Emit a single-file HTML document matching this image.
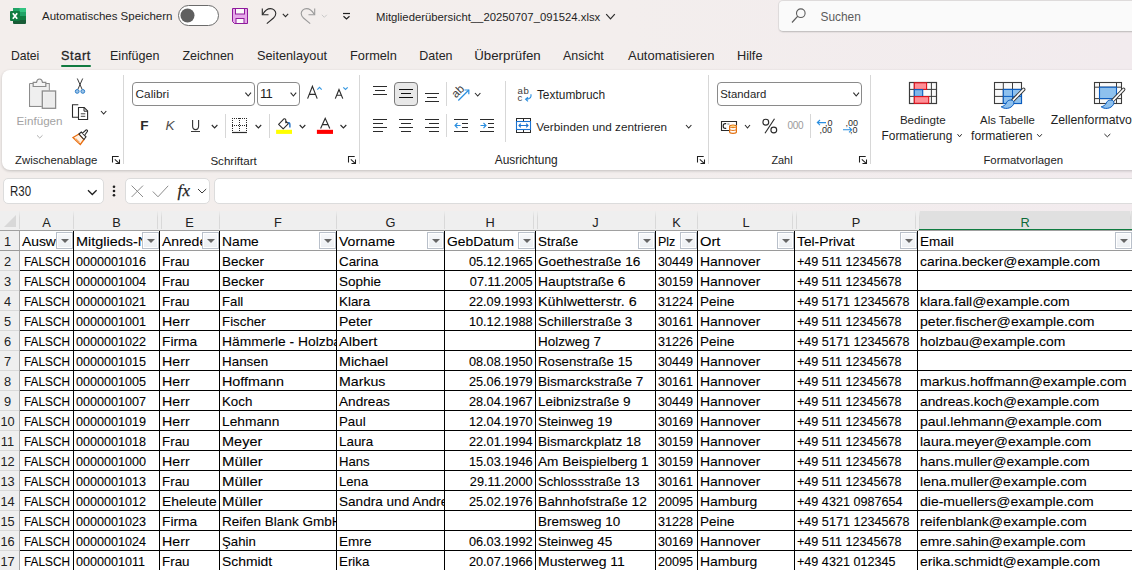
<!DOCTYPE html>
<html><head><meta charset="utf-8">
<style>
*{margin:0;padding:0;box-sizing:border-box}
html,body{width:1132px;height:570px;overflow:hidden}
body{position:relative;background:linear-gradient(90deg,#f3eeec 0%,#f3eeed 55%,#f2ebee 100%);font-family:"Liberation Sans",sans-serif;color:#1f1f1f}
.t{position:absolute;line-height:1;white-space:nowrap}
.a{position:absolute}
svg{position:absolute;overflow:visible}
.ribbon{position:absolute;left:2px;top:69.5px;width:1150px;height:100px;background:#fff;border-radius:8px;box-shadow:0 1px 3px rgba(0,0,0,.2)}
.sep{position:absolute;width:1px;background:#d7d7d7}
.lbl{font-size:11.5px;color:#222}
.tab{font-size:12.7px;color:#242424;top:49.8px}
.combo{position:absolute;background:#fff;border:1px solid #8a8a8a;border-radius:4px}
.hdr{position:absolute;top:211px;height:19px;background:#efefef}
.hl{position:absolute;top:211px;height:18px;width:1px;background:linear-gradient(#eeeeee,#d9d9d9 35%,#d9d9d9)}
.ch{position:absolute;top:212.5px;height:19px;line-height:19px;text-align:center;font-size:12.8px;color:#222}
.rl{position:absolute;left:0;width:19px;height:1px;background:#d9d9d9}
.rn{position:absolute;left:0;width:15px;text-align:center;font-size:12.5px;color:#222;line-height:1}
.vl{position:absolute;top:231px;height:339px;width:1px;background:#000}
.hz{position:absolute;left:20px;width:1112px;height:1px;background:#000}
.c{position:absolute;height:19px;overflow:hidden;white-space:nowrap;font-size:13px;line-height:1;color:#000;-webkit-text-stroke:0.1px #000}
.c span{display:inline-block;transform-origin:0 0}
.c.r span{transform-origin:100% 0}
.fb{position:absolute;width:17px;height:17px;border:1px solid #b9c0ca;background:linear-gradient(#f7f8fa,#eceff3);box-shadow:inset 0 0 0 1px #fff}
.fb:after{content:"";position:absolute;left:3.5px;top:6px;border-left:4px solid transparent;border-right:4px solid transparent;border-top:4.5px solid #666}
</style></head><body>

<!-- ============ TITLE BAR ============ -->
<svg style="left:10px;top:8px" width="16" height="16" viewBox="0 0 16 16">
  <rect x="3" y="0" width="13" height="16" rx="1" fill="#185c37"/>
  <rect x="3" y="0" width="13" height="4" fill="#21a366"/>
  <rect x="9.5" y="0" width="6.5" height="4" fill="#33c481"/>
  <rect x="3" y="4" width="13" height="4" fill="#21a366"/>
  <rect x="3" y="8" width="13" height="4" fill="#107c41"/>
  <rect x="0" y="3" width="10" height="10" rx="1" fill="#107c41"/>
  <path d="M2.8 5.2 L7.2 10.8 M7.2 5.2 L2.8 10.8" stroke="#fff" stroke-width="1.7"/>
</svg>
<div class="t" style="left:42px;top:11px;font-size:11.5px;color:#1f1f1f">Automatisches Speichern</div>
<svg style="left:178px;top:5px" width="41" height="21" viewBox="0 0 41 21">
  <rect x="0.5" y="0.5" width="40" height="20" rx="10" fill="#fff" stroke="#6b6b6b" stroke-width="1"/>
  <circle cx="9.5" cy="10.5" r="7" fill="#5f5f5f"/>
</svg>
<svg style="left:232px;top:8px" width="16" height="16" viewBox="0 0 16 16">
  <path d="M0.5 0.5 H15.5 V15.5 H2.5 L0.5 13.5 Z" fill="#e6a8ea" stroke="#8e1a9c" stroke-width="1"/>
  <rect x="3.5" y="0.5" width="9" height="5.5" fill="#fafafa" stroke="#8e1a9c" stroke-width="1"/>
  <rect x="4" y="10.5" width="8" height="5" fill="#fafafa" stroke="#8e1a9c" stroke-width="1"/>
</svg>
<svg style="left:261px;top:8px" width="16" height="16" viewBox="0 0 16 16">
  <path d="M1.3 0.5 V6.8 H7.5" fill="none" stroke="#2b2b2b" stroke-width="1.1"/>
  <path d="M1.8 6.2 C4 2.5 7 0.6 9.5 0.6 C12.5 0.6 14.8 3 14.8 5.5 C14.8 7.5 13.5 9 12.5 10 L5.8 15.6" fill="none" stroke="#2b2b2b" stroke-width="1.1"/>
</svg>
<svg style="left:282px;top:13px" width="8" height="5" viewBox="0 0 8 5"><path d="M0.8 0.8 L3.5 3.6 L6.2 0.8" fill="none" stroke="#2b2b2b" stroke-width="1.1"/></svg>
<svg style="left:300px;top:8px" width="16" height="16" viewBox="0 0 16 16">
  <path d="M14.7 0.5 V6.8 H8.5" fill="none" stroke="#9a9a9a" stroke-width="1.1"/>
  <path d="M14.2 6.2 C12 2.5 9 0.6 6.5 0.6 C3.5 0.6 1.2 3 1.2 5.5 C1.2 7.5 2.5 9 3.5 10 L10.2 15.6" fill="none" stroke="#9a9a9a" stroke-width="1.1"/>
</svg>
<svg style="left:321px;top:13.5px" width="8" height="5" viewBox="0 0 8 5"><path d="M0.8 0.8 L3.3 3.3 L5.8 0.8" fill="none" stroke="#c9c9c9" stroke-width="1"/></svg>
<svg style="left:342px;top:12px" width="10" height="9" viewBox="0 0 10 9">
  <path d="M1 1.5 H8" stroke="#1f1f1f" stroke-width="1.2"/>
  <path d="M1.5 4.3 L4.5 7 L7.5 4.3" fill="none" stroke="#1f1f1f" stroke-width="1.2"/>
</svg>
<div class="t" style="left:376px;top:12px;font-size:11.3px;color:#1f1f1f">Mitgliederübersicht__20250707_091524.xlsx</div>
<svg style="left:605px;top:13px" width="12" height="8" viewBox="0 0 12 8"><path d="M1.2 1.2 L5.5 5.8 L9.8 1.2" fill="none" stroke="#2b2b2b" stroke-width="1.2"/></svg>

<div class="a" style="left:778px;top:0px;width:400px;height:32px;background:#fafafa;border:1px solid #dedbdb;border-bottom-color:#c6c3c3;border-radius:5px;box-shadow:0 1px 1px rgba(0,0,0,.06)"></div>
<svg style="left:791px;top:8px" width="16" height="16" viewBox="0 0 16 16">
  <circle cx="9.8" cy="5.2" r="4.3" fill="none" stroke="#5c5c5c" stroke-width="1.1"/>
  <path d="M6.8 8.2 L1 14.5" stroke="#5c5c5c" stroke-width="1.2"/>
</svg>
<div class="t" style="left:820.5px;top:12px;font-size:11.9px;color:#5c5c5c">Suchen</div>

<!-- ============ TABS ============ -->
<div class="t" style="left:10.90px;top:50.00px;font-size:12.17px;color:#242424">Datei</div>
<div class="t" style="left:61px;top:50.00px;font-size:12.7px;color:#242424;-webkit-text-stroke:0.3px #242424;letter-spacing:0.65px">Start</div>
<div class="t" style="left:110.00px;top:50.00px;font-size:12.54px;color:#242424">Einfügen</div>
<div class="t" style="left:182.50px;top:50.00px;font-size:12.46px;color:#242424">Zeichnen</div>
<div class="t" style="left:257.00px;top:50.00px;font-size:12.72px;color:#242424">Seitenlayout</div>
<div class="t" style="left:350.00px;top:50.00px;font-size:12.75px;color:#242424">Formeln</div>
<div class="t" style="left:419.25px;top:50.00px;font-size:12.46px;color:#242424">Daten</div>
<div class="t" style="left:474.25px;top:49.00px;font-size:13.29px;color:#242424">Überprüfen</div>
<div class="t" style="left:563.00px;top:50.00px;font-size:12.43px;color:#242424">Ansicht</div>
<div class="t" style="left:628.00px;top:50.00px;font-size:12.97px;color:#242424">Automatisieren</div>
<div class="t" style="left:737.00px;top:50.00px;font-size:12.74px;color:#242424">Hilfe</div>
<div class="a" style="left:61px;top:65px;width:30px;height:2px;background:#117a40;border-radius:1px"></div>

<!-- ============ RIBBON ============ -->
<div class="ribbon"></div>
<svg style="left:28px;top:78px" width="30" height="32" viewBox="28 78 30 32">
 <path d="M29.6 83.5 H33.2 M45.8 83.5 H49.2 V90.5 M41.8 106.3 H29.6 V83.5" fill="#eeeeee" stroke="#8c8c8c" stroke-width="1.2"/>
 <rect x="30.2" y="84.1" width="18.4" height="21.6" fill="#efefef"/>
 <path d="M33.2 82.3 H36.5 C36.8 80 38 79 39.5 79 C41 79 42.2 80 42.5 82.3 H45.8 V86.5 H33.2 Z" fill="#f4f4f4" stroke="#8c8c8c" stroke-width="1.2"/>
 <rect x="42.3" y="91" width="13.3" height="17.3" fill="#f0f0f0" stroke="#8c8c8c" stroke-width="1.3"/>
 <rect x="44.3" y="93" width="9.3" height="13.3" fill="#ececec"/>
</svg>
<div class="t" style="left:16.60px;top:115.00px;font-size:11.65px;color:#a3a3a3">Einfügen</div>
<svg style="left:36px;top:134px" width="9" height="6" viewBox="36 134 9 6"><path d="M37 135.3 L39.75 138 L42.5 135.3" fill="none" stroke="#b0b0b0" stroke-width="1"/></svg>
<svg style="left:73px;top:77px" width="14" height="18" viewBox="73 77 14 18">
 <path d="M77.3 78.5 L82.2 89.5 M82.7 78.5 L77.8 89.5" stroke="#3a3a3a" stroke-width="1" fill="none"/>
 <circle cx="77.2" cy="91.4" r="1.9" fill="#9cc3e8" stroke="#2f7fc9" stroke-width="1"/>
 <circle cx="82.8" cy="91.4" r="1.9" fill="#9cc3e8" stroke="#2f7fc9" stroke-width="1"/>
</svg>
<svg style="left:71px;top:103px" width="19" height="18" viewBox="71 103 19 18">
 <path d="M78.3 104.7 H72.5 V117.3 H78" fill="none" stroke="#2b2b2b" stroke-width="1.1"/>
 <path d="M78.5 107.5 H84.2 L87.6 110.9 V119.5 H78.5 Z" fill="#fff" stroke="#2b2b2b" stroke-width="1.1"/>
 <path d="M84 107.5 V111.2 H87.6" fill="none" stroke="#2b2b2b" stroke-width="1"/>
 <path d="M80.8 113.8 H85.3 M80.8 116.3 H85.3" stroke="#2b2b2b" stroke-width="0.9"/>
</svg>
<svg style="left:100px;top:110px" width="9" height="6" viewBox="100 110 9 6"><path d="M101 111 L103.65 114 L106.3 111" fill="none" stroke="#2b2b2b" stroke-width="1.1"/></svg>
<svg style="left:72px;top:129px" width="17" height="17" viewBox="72 129 17 17">
 <path d="M73 137.5 L79 134 L84 139.5 L80.3 144.5 C78 142.5 75.5 140 73 137.5 Z" fill="#fff3e6" stroke="#e86d0f" stroke-width="1.3"/>
 <path d="M75.5 138.8 L79.3 142.5" stroke="#f5a460" stroke-width="1.6"/>
 <path d="M79 134 L81.3 132 L86 136.8 L84 139.5 Z" fill="#fff" stroke="#2b2b2b" stroke-width="1.1"/>
 <path d="M82.5 133.2 L86 130 C86.8 129.6 87.8 130.4 87.5 131.3 L84.8 135" fill="#fff" stroke="#2b2b2b" stroke-width="1.1"/>
</svg>
<div class="t" style="left:15.00px;top:155.00px;font-size:11.40px;color:#242424">Zwischenablage</div>
<svg style="left:111px;top:155px" width="11" height="11" viewBox="0 0 11 11"><path d="M1.5 7.5 V1.5 H7.7" fill="none" stroke="#1f1f1f" stroke-width="1.05"/><path d="M3.8 4.3 L8.2 8.3 M8.5 4.5 V8.5 H4.5" fill="none" stroke="#1f1f1f" stroke-width="1.05"/></svg>
<div class="sep" style="left:123px;top:75px;height:89px"></div>
<div class="combo" style="left:132.4px;top:82.4px;width:122.5px;height:23.4px"></div>
<div class="t" style="left:135.60px;top:89.00px;font-size:11.82px;color:#1f1f1f">Calibri</div>
<svg style="left:244px;top:91px" width="9" height="7" viewBox="244 91 9 7"><path d="M245.4 92.6 L248.2 96 L251 92.6" fill="none" stroke="#2b2b2b" stroke-width="1.1"/></svg>
<div class="combo" style="left:257px;top:82.4px;width:42.5px;height:23.4px"></div>
<div class="t" style="left:260px;top:87px;font-size:13px;letter-spacing:-0.8px;color:#1f1f1f">11</div>
<svg style="left:289px;top:91px" width="10" height="7" viewBox="289 91 10 7"><path d="M290.6 92.6 L293.4 96 L296.2 92.6" fill="none" stroke="#2b2b2b" stroke-width="1.1"/></svg>
<svg style="left:305px;top:85px" width="46" height="15" viewBox="305 85 46 15">
 <path d="M307.6 98.6 L312.4 86.4 L317.2 98.6 M309.3 94.3 H315.5" fill="none" stroke="#2b2b2b" stroke-width="1.15"/>
 <path d="M317.3 89.6 L319.5 87.4 L321.7 89.6" fill="none" stroke="#3b9ae1" stroke-width="1.2"/>
 <path d="M335.3 98.6 L339 89.6 L342.8 98.6 M336.7 95.2 H341.3" fill="none" stroke="#2b2b2b" stroke-width="1.15"/>
 <path d="M343.3 87.3 L345.5 89.5 L347.7 87.3" fill="none" stroke="#3b9ae1" stroke-width="1.2"/>
</svg>
<div class="t" style="left:140.2px;top:119px;font-size:13.6px;font-weight:bold;color:#2b2b2b">F</div>
<div class="t" style="left:165.4px;top:119px;font-size:13.6px;font-style:italic;color:#505050">K</div>
<svg style="left:190px;top:119px" width="12" height="14" viewBox="190 119 12 14"><path d="M192.6 120 V126 C192.6 128.6 193.8 129.6 195.6 129.6 C197.4 129.6 198.6 128.6 198.6 126 V120" fill="none" stroke="#333" stroke-width="1.1"/></svg>
<div class="a" style="left:191px;top:131px;width:9px;height:1px;background:#3a3a3a"></div>
<svg style="left:210px;top:124px" width="10" height="6" viewBox="210 124 10 6"><path d="M211.8 125 L214.60000000000002 128 L217.4 125" fill="none" stroke="#2b2b2b" stroke-width="1.1"/></svg>
<div class="sep" style="left:225px;top:114px;height:24px"></div>
<svg style="left:231px;top:117px" width="17" height="17" viewBox="231 117 17 17">
 <path d="M232.5 118 V132 M246.5 118 V132 M239.5 118 V132 M232 118.5 H247 M232 125.5 H247" fill="none" stroke="#2b2b2b" stroke-width="1" stroke-dasharray="1 1"/>
 <path d="M232 132.5 H247" stroke="#2b2b2b" stroke-width="1.2"/>
</svg>
<svg style="left:254px;top:124px" width="10" height="6" viewBox="254 124 10 6"><path d="M255.6 125 L258.4 128 L261.2 125" fill="none" stroke="#2b2b2b" stroke-width="1.1"/></svg>
<div class="sep" style="left:269px;top:114px;height:24px"></div>
<svg style="left:275px;top:116px" width="19" height="19" viewBox="275 116 19 19">
 <path d="M285.8 121.2 L288.4 123.6 L283.2 128.8 L278.6 124.3 L283.2 119.6 C283.7 118.4 285.6 118.4 285.8 119.8 V123.2" fill="#fff" stroke="#2b2b2b" stroke-width="1.1" stroke-linejoin="round"/>
 <path d="M288 122.9 C289.3 122.2 289.9 123.4 289.9 124.8 V127.6" fill="none" stroke="#1f6fc4" stroke-width="1.4"/>
 <rect x="276.1" y="129.8" width="15.9" height="4.1" fill="#ffff00"/>
</svg>
<svg style="left:298px;top:124px" width="10" height="6" viewBox="298 124 10 6"><path d="M299.7 125 L302.5 128 L305.3 125" fill="none" stroke="#2b2b2b" stroke-width="1.1"/></svg>
<svg style="left:316px;top:117px" width="18" height="18" viewBox="316 117 18 18">
 <path d="M320.6 128.5 L325.2 118.3 L329.8 128.5 M322.4 124.6 H328" fill="none" stroke="#2b2b2b" stroke-width="1.15"/>
 <rect x="316.9" y="129.8" width="16.1" height="4.1" fill="#ff0000"/>
</svg>
<svg style="left:339px;top:124px" width="10" height="6" viewBox="339 124 10 6"><path d="M340.5 125 L343.4 128 L346.3 125" fill="none" stroke="#2b2b2b" stroke-width="1.1"/></svg>
<div class="t" style="left:210.40px;top:155.00px;font-size:11.60px;color:#242424">Schriftart</div>
<svg style="left:347px;top:155px" width="11" height="11" viewBox="0 0 11 11"><path d="M1.5 7.5 V1.5 H7.7" fill="none" stroke="#1f1f1f" stroke-width="1.05"/><path d="M3.8 4.3 L8.2 8.3 M8.5 4.5 V8.5 H4.5" fill="none" stroke="#1f1f1f" stroke-width="1.05"/></svg>
<div class="sep" style="left:359px;top:75px;height:89px"></div>
<div class="a" style="left:394px;top:82px;width:24px;height:23.5px;background:#e8e8e8;border:1px solid #7a7a7a;border-radius:4px"></div>
<svg style="left:370px;top:80px" width="130" height="60" viewBox="370 80 130 60">
 <path d="M373 86.5 H387 M375 90.5 H385 M373 94.5 H387 " stroke="#2b2b2b" stroke-width="1"/>
 <path d="M399 89.5 H413 M401 93.5 H411 M399 97.5 H413 " stroke="#111" stroke-width="1.1"/>
 <path d="M425 93.5 H439 M427 97.5 H437 M425 101.5 H439 " stroke="#2b2b2b" stroke-width="1"/>
 <path d="M373 119.5 H387 M373 123.5 H383 M373 127.5 H387 M373 131.5 H383 " stroke="#2b2b2b" stroke-width="1"/>
 <path d="M399 119.5 H413 M401 123.5 H411 M399 127.5 H413 M401 131.5 H411 " stroke="#2b2b2b" stroke-width="1"/>
 <path d="M425 119.5 H439 M429 123.5 H439 M425 127.5 H439 M429 131.5 H439 " stroke="#2b2b2b" stroke-width="1"/>
 <path d="M454 119.5 H468 M462 123.5 H468 M462 127.5 H468 M454 131.5 H468" stroke="#2b2b2b" stroke-width="1"/>
 <path d="M460.5 125.5 H455 M457.5 123 L455 125.5 L457.5 128" fill="none" stroke="#2b8fe0" stroke-width="1.1"/>
 <path d="M480 119.5 H494 M488 123.5 H494 M488 127.5 H494 M480 131.5 H494" stroke="#2b2b2b" stroke-width="1"/>
 <path d="M480.5 125.5 H486 M483.5 123 L486 125.5 L483.5 128" fill="none" stroke="#2b8fe0" stroke-width="1.1"/>
</svg>
<div class="sep" style="left:446px;top:82px;height:24px"></div>
<div class="sep" style="left:446px;top:114px;height:23px"></div>
<svg style="left:451px;top:84px" width="20" height="18" viewBox="451 84 20 18">
 <text x="0" y="0" transform="translate(456 98.5) rotate(-45)" font-family="Liberation Sans" font-size="11.5" fill="#3a3a3a">ab</text>
 <path d="M458.3 100.5 L468.8 90" stroke="#2b8fe0" stroke-width="1.2"/>
 <path d="M464.5 90 H468.8 V94.3" fill="none" stroke="#2b8fe0" stroke-width="1.2"/>
</svg>
<svg style="left:474px;top:92px" width="9" height="6" viewBox="474 92 9 6"><path d="M475 93 L477.7 96 L480.4 93" fill="none" stroke="#2b2b2b" stroke-width="1.1"/></svg>
<div class="sep" style="left:505px;top:81px;height:61px"></div>
<svg style="left:516px;top:85px" width="19" height="19" viewBox="516 85 19 19">
 <text x="517.6" y="94.2" font-family="Liberation Sans" font-size="9.6" fill="#3a3a3a" letter-spacing="0.6">ab</text>
 <text x="517.6" y="101.2" font-family="Liberation Sans" font-size="9.6" fill="#3a3a3a">c</text>
 <path d="M530.8 94.2 C531.8 96.8 530.3 99.3 526.2 99.3 M528 97.2 L525.6 99.3 L528 101.4" fill="none" stroke="#2b8fe0" stroke-width="1.15"/>
</svg>
<div class="t" style="left:536.90px;top:90.00px;font-size:11.93px;color:#1f1f1f">Textumbruch</div>
<svg style="left:515px;top:117px" width="17" height="17" viewBox="515 117 17 17">
 <rect x="516.5" y="118.5" width="14" height="14" fill="#fff" stroke="#2b2b2b" stroke-width="1"/>
 <path d="M523.5 118.5 V121.5 M523.5 129.5 V132.5" stroke="#2b2b2b" stroke-width="1"/>
 <rect x="516.5" y="121.5" width="14" height="8" fill="#fff" stroke="#1a73d1" stroke-width="1.1"/>
 <path d="M519 125.5 H528 M520.8 123.7 L519 125.5 L520.8 127.3 M526.2 123.7 L528 125.5 L526.2 127.3" fill="none" stroke="#1a73d1" stroke-width="1.1"/>
</svg>
<div class="t" style="left:536.20px;top:121.00px;font-size:11.73px;color:#1f1f1f">Verbinden und zentrieren</div>
<svg style="left:685px;top:124px" width="9" height="6" viewBox="685 124 9 6"><path d="M686 125 L688.7 128 L691.4 125" fill="none" stroke="#2b2b2b" stroke-width="1.1"/></svg>
<div class="t" style="left:494.70px;top:155.00px;font-size:11.93px;color:#242424">Ausrichtung</div>
<svg style="left:696px;top:155px" width="11" height="11" viewBox="0 0 11 11"><path d="M1.5 7.5 V1.5 H7.7" fill="none" stroke="#1f1f1f" stroke-width="1.05"/><path d="M3.8 4.3 L8.2 8.3 M8.5 4.5 V8.5 H4.5" fill="none" stroke="#1f1f1f" stroke-width="1.05"/></svg>
<div class="sep" style="left:708px;top:75px;height:89px"></div>
<div class="combo" style="left:717.3px;top:82.1px;width:145px;height:23.5px"></div>
<div class="t" style="left:720.30px;top:89.00px;font-size:11.33px;color:#1f1f1f">Standard</div>
<svg style="left:852px;top:91px" width="9" height="7" viewBox="852 91 9 7"><path d="M853.4 92.6 L856.2 96 L859 92.6" fill="none" stroke="#2b2b2b" stroke-width="1.1"/></svg>
<svg style="left:720px;top:120px" width="19" height="15" viewBox="720 120 19 15">
 <path d="M729 130.5 H721.5 V121.5 H736.5 V125.5" fill="none" stroke="#2b2b2b" stroke-width="1.1"/>
 <path d="M726.2 123.6 C723.6 123.3 723.2 124.7 723.2 126 C723.2 127.4 723.6 128.7 726.2 128.4" fill="none" stroke="#1f1f1f" stroke-width="1.2"/>
 <path d="M727.3 124 H729.5" stroke="#555" stroke-width="0.8"/>
 <path d="M729.6 126.3 C729.6 124.6 736.4 124.6 736.4 126.3 V132 C736.4 133.8 729.6 133.8 729.6 132 Z" fill="#fff" stroke="#e2700f" stroke-width="1.2"/>
 <path d="M729.6 126.5 C729.6 128 736.4 128 736.4 126.5 M729.6 129.3 C729.6 130.8 736.4 130.8 736.4 129.3" fill="none" stroke="#e2700f" stroke-width="1"/>
 <ellipse cx="733" cy="126.2" rx="2.2" ry="0.7" fill="#fbd36b"/>
</svg>
<svg style="left:744px;top:124px" width="8" height="6" viewBox="744 124 8 6"><path d="M745 125 L747.5 128 L750 125" fill="none" stroke="#2b2b2b" stroke-width="1.1"/></svg>
<svg style="left:760px;top:117px" width="20" height="18" viewBox="760 117 20 18"><circle cx="765.8" cy="122.2" r="2.9" fill="none" stroke="#2b2b2b" stroke-width="1.15"/><circle cx="773.8" cy="130" r="2.9" fill="none" stroke="#2b2b2b" stroke-width="1.15"/><path d="M774.5 118.8 L765 133.3" stroke="#2b2b2b" stroke-width="1.15"/></svg>
<div class="t" style="left:787.5px;top:121px;font-size:10px;color:#9a9a9a;letter-spacing:-0.3px">000</div>
<div class="sep" style="left:810px;top:114px;height:24px"></div>
<svg style="left:815px;top:117px" width="46" height="18" viewBox="815 117 46 18">
 <text x="825" y="126.2" font-family="Liberation Sans" font-size="9" fill="#2b2b2b">,0</text>
 <text x="819.5" y="132.8" font-family="Liberation Sans" font-size="9" fill="#2b2b2b">,00</text>
 <path d="M826 122.6 H817.5 M820 120 L817.3 122.6 L820 125.2" fill="none" stroke="#2b8fe0" stroke-width="1.1"/>
 <text x="845.5" y="126" font-family="Liberation Sans" font-size="9" fill="#2b2b2b">,00</text>
 <text x="850" y="132.8" font-family="Liberation Sans" font-size="9" fill="#2b2b2b">,0</text>
 <path d="M843 129.8 H851.5 M849 127.2 L851.7 129.8 L849 132.4" fill="none" stroke="#2b8fe0" stroke-width="1.1"/>
</svg>
<div class="t" style="left:771.40px;top:155.00px;font-size:10.90px;color:#242424">Zahl</div>
<svg style="left:858px;top:155px" width="11" height="11" viewBox="0 0 11 11"><path d="M1.5 7.5 V1.5 H7.7" fill="none" stroke="#1f1f1f" stroke-width="1.05"/><path d="M3.8 4.3 L8.2 8.3 M8.5 4.5 V8.5 H4.5" fill="none" stroke="#1f1f1f" stroke-width="1.05"/></svg>
<div class="sep" style="left:870px;top:75px;height:89px"></div>
<svg style="left:908px;top:81px" width="30" height="24" viewBox="908 81 30 24">
 <rect x="909.5" y="82.5" width="27" height="21" fill="#fafafa" stroke="#3c3c3c" stroke-width="1.2"/>
 <path d="M914.3 82.5 V103.5 M931.4 82.5 V103.5 M909.5 89.4 H936.5 M909.5 96.4 H936.5" stroke="#3c3c3c" stroke-width="1"/>
 <rect x="914.3" y="82.8" width="12.3" height="6.6" fill="#ff8f96" stroke="#e0101a" stroke-width="1.1"/>
 <rect x="914.3" y="89.6" width="8.4" height="6.8" fill="#7fb6ea" stroke="#0a5cc0" stroke-width="1.1"/>
 <rect x="914.3" y="96.6" width="14.4" height="6.7" fill="#ff8f96" stroke="#e0101a" stroke-width="1.1"/>
</svg>
<div class="t" style="left:899.90px;top:114.00px;font-size:11.60px;color:#1f1f1f">Bedingte</div>
<div class="t" style="left:881.50px;top:131.00px;font-size:11.91px;color:#1f1f1f">Formatierung</div>
<svg style="left:956px;top:133px" width="8" height="6" viewBox="956 133 8 6"><path d="M957.5 134.2 L959.6 136.8 L961.7 134.2" fill="none" stroke="#2b2b2b" stroke-width="1"/></svg>
<svg style="left:992px;top:81px" width="34" height="30" viewBox="992 81 34 30">
 <rect x="994.5" y="82.5" width="27" height="21" fill="#fafafa" stroke="#3c3c3c" stroke-width="1.1"/>
 <path d="M1003.3 82.5 V103.5 M1012.5 82.5 V103.5 M994.5 89.4 H1021.5 M994.5 96.4 H1021.5" stroke="#3c3c3c" stroke-width="1"/>
 <rect x="1003.3" y="89.4" width="18.2" height="14.1" fill="#8ec1ee" stroke="#0a5cc0" stroke-width="1.1"/>
 <path d="M1012.5 89.4 V103.5 M1003.3 96.4 H1021.5" stroke="#0a5cc0" stroke-width="1"/>
 <path d="M1023.6 89.4 L1011.8 101.6" stroke="#3a3a3a" stroke-width="3.6" stroke-linecap="round"/>
 <path d="M1023.6 89.4 L1011.8 101.6" stroke="#fff" stroke-width="1.6" stroke-linecap="round"/>
 <path d="M1012.8 100.6 C1010 99.3 1007.2 100.5 1006.3 103 C1005.5 105 1003.5 106.3 1001.2 106.8 C1004 109.2 1011 109.3 1013.6 104.2 C1014.2 103 1013.8 101.5 1012.8 100.6 Z" fill="#8ec1ee" stroke="#0a5cc0" stroke-width="1"/>
</svg>
<div class="t" style="left:980.10px;top:115.00px;font-size:11.35px;color:#1f1f1f">Als Tabelle</div>
<div class="t" style="left:971.10px;top:130.00px;font-size:12.14px;color:#1f1f1f">formatieren</div>
<svg style="left:1036px;top:133px" width="8" height="6" viewBox="1036 133 8 6"><path d="M1037.2 134.2 L1039.5500000000002 136.8 L1041.9 134.2" fill="none" stroke="#2b2b2b" stroke-width="1"/></svg>
<svg style="left:1092px;top:81px" width="34" height="30" viewBox="1092 81 34 30">
 <rect x="1094.5" y="82.5" width="27" height="21" fill="#fafafa" stroke="#3c3c3c" stroke-width="1.1"/>
 <path d="M1099.5 82.5 V103.5 M1116.5 82.5 V103.5 M1094.5 87.2 H1121.5 M1094.5 98.6 H1121.5" stroke="#3c3c3c" stroke-width="1"/>
 <rect x="1099.5" y="87.2" width="17" height="11.4" fill="#8ec1ee" stroke="#0a5cc0" stroke-width="1.1"/>
 <path d="M1123.6 89.4 L1111.8 101.6" stroke="#3a3a3a" stroke-width="3.6" stroke-linecap="round"/>
 <path d="M1123.6 89.4 L1111.8 101.6" stroke="#fff" stroke-width="1.6" stroke-linecap="round"/>
 <path d="M1112.8 100.6 C1110 99.3 1107.2 100.5 1106.3 103 C1105.5 105 1103.5 106.3 1101.2 106.8 C1104 109.2 1111 109.3 1113.6 104.2 C1114.2 103 1113.8 101.5 1112.8 100.6 Z" fill="#8ec1ee" stroke="#0a5cc0" stroke-width="1"/>
</svg>
<div class="t" style="left:1050.80px;top:114.00px;font-size:12.25px;color:#1f1f1f">Zellenformatvorlagen</div>
<svg style="left:1103px;top:133px" width="10" height="6" viewBox="1103 133 10 6"><path d="M1104.4 134 L1107.35 136.8 L1110.3 134" fill="none" stroke="#2b2b2b" stroke-width="1"/></svg>
<div class="t" style="left:983.40px;top:155.00px;font-size:11.38px;color:#242424">Formatvorlagen</div>

<!-- ============ FORMULA BAR ============ -->
<div class="a" style="left:2.5px;top:178px;width:101px;height:25.5px;background:#fff;border:1px solid #dcdcdc;border-radius:5px"></div>
<div class="t" style="left:9.5px;top:183.8px;font-size:14px;color:#1f1f1f;transform:scaleX(0.82);transform-origin:0 0">R30</div>
<svg style="left:87px;top:189px" width="12" height="8" viewBox="0 0 12 8"><path d="M1 1.2 L5.3 5.5 L9.6 1.2" fill="none" stroke="#1f1f1f" stroke-width="1.3"/></svg>
<svg style="left:112px;top:185px" width="4" height="12" viewBox="0 0 4 12"><circle cx="2" cy="1.8" r="1.3" fill="#1f1f1f"/><circle cx="2" cy="6" r="1.3" fill="#1f1f1f"/><circle cx="2" cy="10.2" r="1.3" fill="#1f1f1f"/></svg>
<div class="a" style="left:124.5px;top:178px;width:85px;height:25.5px;background:#fff;border:1px solid #dcdcdc;border-radius:5px"></div>
<svg style="left:131px;top:185px" width="13" height="13" viewBox="0 0 13 13"><path d="M0.6 0.6 L12 12 M12 0.6 L0.6 12" stroke="#8c8c8c" stroke-width="1"/></svg>
<svg style="left:152px;top:185px" width="17" height="13" viewBox="0 0 17 13"><path d="M0.8 6.5 L6 11.8 L16.2 0.8" fill="none" stroke="#8c8c8c" stroke-width="1"/></svg>
<div class="t" style="left:177.5px;top:181.5px;font-family:'Liberation Serif',serif;font-style:italic;font-size:17px;color:#1f1f1f;-webkit-text-stroke:0.25px #1f1f1f;letter-spacing:0.2px">fx</div>
<svg style="left:197px;top:188px" width="11" height="7" viewBox="0 0 11 7"><path d="M1 1 L5 5 L9.2 1" fill="none" stroke="#3a3a3a" stroke-width="1"/></svg>
<div class="a" style="left:214px;top:178px;width:950px;height:25.5px;background:#fff;border:1px solid #dcdcdc;border-radius:5px"></div>

<!-- ============ GRID ============ -->
<div class="hdr" style="left:0;width:919px"></div>
<div class="hdr" style="left:919px;width:213px;background:#e0e0e0"></div>
<div class="a" style="left:919px;top:229px;width:213px;height:2px;background:#107c41"></div>
<svg style="left:4px;top:215px" width="12" height="12" viewBox="0 0 12 12"><path d="M12 0 V12 H0 Z" fill="#d8d8d8"/></svg>
<div class="hl" style="left:19px"></div>
<div class="hl" style="left:73px"></div>
<div class="hl" style="left:157px"></div>
<div class="hl" style="left:161px"></div>
<div class="hl" style="left:219px"></div>
<div class="hl" style="left:336px"></div>
<div class="hl" style="left:444px"></div>
<div class="hl" style="left:533px"></div>
<div class="hl" style="left:537px"></div>
<div class="hl" style="left:655px"></div>
<div class="hl" style="left:697px"></div>
<div class="hl" style="left:792px"></div>
<div class="hl" style="left:796px"></div>
<div class="hl" style="left:915px"></div>
<div class="hl" style="left:919px"></div>
<div class="hl" style="left:1130px"></div>
<div class="a" style="left:0;top:230px;width:1132px;height:1px;background:#a0a0a0"></div>
<div class="ch" style="left:20px;width:53px;color:#222">A</div>
<div class="ch" style="left:74px;width:85px;color:#222">B</div>
<div class="ch" style="left:160px;width:59px;color:#222">E</div>
<div class="ch" style="left:220px;width:116px;color:#222">F</div>
<div class="ch" style="left:337px;width:107px;color:#222">G</div>
<div class="ch" style="left:445px;width:90px;color:#222">H</div>
<div class="ch" style="left:536px;width:119px;color:#222">J</div>
<div class="ch" style="left:656px;width:41px;color:#222">K</div>
<div class="ch" style="left:698px;width:96px;color:#222">L</div>
<div class="ch" style="left:795px;width:122px;color:#222">P</div>
<div class="ch" style="left:918px;width:214px;color:#0e6b38">R</div>
<div class="a" style="left:0;top:231px;width:19px;height:339px;background:#efefef"></div>
<div class="a" style="left:19px;top:231px;width:1px;height:339px;background:#a6a6a6"></div>
<div class="a" style="left:20px;top:231px;width:1112px;height:339px;background:#fff"></div>
<div class="rn" style="top:235.66px;font-size:12.8px">1</div>
<div class="rl" style="top:270px"></div>
<div class="rn" style="top:255.66px;font-size:12.8px">2</div>
<div class="rl" style="top:290px"></div>
<div class="rn" style="top:275.66px;font-size:12.8px">3</div>
<div class="rl" style="top:310px"></div>
<div class="rn" style="top:295.66px;font-size:12.8px">4</div>
<div class="rl" style="top:330px"></div>
<div class="rn" style="top:315.66px;font-size:12.8px">5</div>
<div class="rl" style="top:350px"></div>
<div class="rn" style="top:335.66px;font-size:12.8px">6</div>
<div class="rl" style="top:370px"></div>
<div class="rn" style="top:355.66px;font-size:12.8px">7</div>
<div class="rl" style="top:390px"></div>
<div class="rn" style="top:375.66px;font-size:12.8px">8</div>
<div class="rl" style="top:410px"></div>
<div class="rn" style="top:395.66px;font-size:12.8px">9</div>
<div class="rl" style="top:430px"></div>
<div class="rn" style="top:415.66px;font-size:12.8px">10</div>
<div class="rl" style="top:450px"></div>
<div class="rn" style="top:435.66px;font-size:12.8px">11</div>
<div class="rl" style="top:470px"></div>
<div class="rn" style="top:455.66px;font-size:12.8px">12</div>
<div class="rl" style="top:490px"></div>
<div class="rn" style="top:475.66px;font-size:12.8px">13</div>
<div class="rl" style="top:510px"></div>
<div class="rn" style="top:495.66px;font-size:12.8px">14</div>
<div class="rl" style="top:530px"></div>
<div class="rn" style="top:515.66px;font-size:12.8px">15</div>
<div class="rl" style="top:550px"></div>
<div class="rn" style="top:535.66px;font-size:12.8px">16</div>
<div class="rl" style="top:570px"></div>
<div class="rn" style="top:555.66px;font-size:12.8px">17</div>
<div class="hz" style="top:270px"></div>
<div class="hz" style="top:290px"></div>
<div class="hz" style="top:310px"></div>
<div class="hz" style="top:330px"></div>
<div class="hz" style="top:350px"></div>
<div class="hz" style="top:370px"></div>
<div class="hz" style="top:390px"></div>
<div class="hz" style="top:410px"></div>
<div class="hz" style="top:430px"></div>
<div class="hz" style="top:450px"></div>
<div class="hz" style="top:470px"></div>
<div class="hz" style="top:490px"></div>
<div class="hz" style="top:510px"></div>
<div class="hz" style="top:530px"></div>
<div class="hz" style="top:550px"></div>
<div class="hz" style="top:570px"></div>
<div class="a" style="left:0;top:250px;width:1132px;height:1px;background:#9a9a9a"></div>
<div class="vl" style="left:73px"></div>
<div class="vl" style="left:159px"></div>
<div class="vl" style="left:219px"></div>
<div class="vl" style="left:336px"></div>
<div class="vl" style="left:444px"></div>
<div class="vl" style="left:535px"></div>
<div class="vl" style="left:655px"></div>
<div class="vl" style="left:697px"></div>
<div class="vl" style="left:794px"></div>
<div class="vl" style="left:917px"></div>
<div class="c" style="left:20px;width:36px;top:234.57px;font-size:13.5px"><span style="margin-left:1.5px;transform:scaleX(1.0259)">Auswahl</span></div>
<div class="fb" style="left:56px;top:232px"></div>
<div class="c" style="left:74px;width:68px;top:234.57px;font-size:13.5px"><span style="margin-left:1.5px;transform:scaleX(1.0688)">Mitglieds-Nr</span></div>
<div class="fb" style="left:142px;top:232px"></div>
<div class="c" style="left:160px;width:42px;top:234.57px;font-size:13.5px"><span style="margin-left:1.5px;transform:scaleX(1.0381)">Anrede</span></div>
<div class="fb" style="left:202px;top:232px"></div>
<div class="c" style="left:220px;width:99px;top:234.57px;font-size:13.5px"><span style="margin-left:1.5px;transform:scaleX(1.0218)">Name</span></div>
<div class="fb" style="left:319px;top:232px"></div>
<div class="c" style="left:337px;width:90px;top:234.57px;font-size:13.5px"><span style="margin-left:1.5px;transform:scaleX(1.0389)">Vorname</span></div>
<div class="fb" style="left:427px;top:232px"></div>
<div class="c" style="left:445px;width:73px;top:234.57px;font-size:13.5px"><span style="margin-left:1.5px;transform:scaleX(1.0262)">GebDatum</span></div>
<div class="fb" style="left:518px;top:232px"></div>
<div class="c" style="left:536px;width:102px;top:234.57px;font-size:13.5px"><span style="margin-left:1.5px;transform:scaleX(0.9931)">Straße</span></div>
<div class="fb" style="left:638px;top:232px"></div>
<div class="c" style="left:656px;width:24px;top:234.57px;font-size:13.5px"><span style="margin-left:1.5px;transform:scaleX(0.9249)">Plz</span></div>
<div class="fb" style="left:680px;top:232px"></div>
<div class="c" style="left:698px;width:79px;top:234.57px;font-size:13.5px"><span style="margin-left:1.5px;transform:scaleX(1.0911)">Ort</span></div>
<div class="fb" style="left:777px;top:232px"></div>
<div class="c" style="left:795px;width:105px;top:234.57px;font-size:13.5px"><span style="margin-left:1.5px;transform:scaleX(1.0213)">Tel-Privat</span></div>
<div class="fb" style="left:900px;top:232px"></div>
<div class="c" style="left:918px;width:197px;top:234.57px;font-size:13.5px"><span style="margin-left:1.5px;transform:scaleX(1.0019)">Email</span></div>
<div class="fb" style="left:1115px;top:232px"></div>
<div class="c" style="left:23.94px;width:56.73px;top:254.57px;font-size:13.5px"><span style="transform:scaleX(0.8773)">FALSCH</span></div>
<div class="c" style="left:74px;width:85px;top:254.57px;font-size:13.5px"><span style="margin-left:1.5px;transform:scaleX(0.9323)">0000001016</span></div>
<div class="c" style="left:160px;width:59px;top:254.57px;font-size:13.5px"><span style="margin-left:1.5px;transform:scaleX(0.9925)">Frau</span></div>
<div class="c" style="left:220px;width:116px;top:254.57px;font-size:13.5px"><span style="margin-left:1.5px;transform:scaleX(1.0003)">Becker</span></div>
<div class="c" style="left:337px;width:107px;top:254.57px;font-size:13.5px"><span style="margin-left:1.5px;transform:scaleX(0.9917)">Carina</span></div>
<div class="c r" style="left:445px;width:90px;top:254.57px;font-size:13.5px;text-align:right"><span style="margin-right:2px;transform:scaleX(0.9424)">05.12.1965</span></div>
<div class="c" style="left:536px;width:119px;top:254.57px;font-size:13.5px"><span style="margin-left:1.5px;transform:scaleX(1.0112)">Goethestraße 16</span></div>
<div class="c" style="left:656px;width:41px;top:254.57px;font-size:13.5px"><span style="margin-left:1.5px;transform:scaleX(0.9323)">30449</span></div>
<div class="c" style="left:698px;width:96px;top:254.57px;font-size:13.5px"><span style="margin-left:1.5px;transform:scaleX(1.0330)">Hannover</span></div>
<div class="c" style="left:795px;width:122px;top:254.57px;font-size:13.5px"><span style="margin-left:1.5px;transform:scaleX(0.9332)">+49 511 12345678</span></div>
<div class="c" style="left:918px;width:214px;top:254.57px;font-size:13.5px"><span style="margin-left:1.5px;transform:scaleX(1.0282)">carina.becker@example.com</span></div>
<div class="c" style="left:23.94px;width:56.73px;top:274.57px;font-size:13.5px"><span style="transform:scaleX(0.8773)">FALSCH</span></div>
<div class="c" style="left:74px;width:85px;top:274.57px;font-size:13.5px"><span style="margin-left:1.5px;transform:scaleX(0.9323)">0000001004</span></div>
<div class="c" style="left:160px;width:59px;top:274.57px;font-size:13.5px"><span style="margin-left:1.5px;transform:scaleX(0.9925)">Frau</span></div>
<div class="c" style="left:220px;width:116px;top:274.57px;font-size:13.5px"><span style="margin-left:1.5px;transform:scaleX(1.0003)">Becker</span></div>
<div class="c" style="left:337px;width:107px;top:274.57px;font-size:13.5px"><span style="margin-left:1.5px;transform:scaleX(0.9997)">Sophie</span></div>
<div class="c r" style="left:445px;width:90px;top:274.57px;font-size:13.5px;text-align:right"><span style="margin-right:2px;transform:scaleX(0.9424)">07.11.2005</span></div>
<div class="c" style="left:536px;width:119px;top:274.57px;font-size:13.5px"><span style="margin-left:1.5px;transform:scaleX(1.0223)">Hauptstraße 6</span></div>
<div class="c" style="left:656px;width:41px;top:274.57px;font-size:13.5px"><span style="margin-left:1.5px;transform:scaleX(0.9323)">30159</span></div>
<div class="c" style="left:698px;width:96px;top:274.57px;font-size:13.5px"><span style="margin-left:1.5px;transform:scaleX(1.0330)">Hannover</span></div>
<div class="c" style="left:795px;width:122px;top:274.57px;font-size:13.5px"><span style="margin-left:1.5px;transform:scaleX(0.9332)">+49 511 12345678</span></div>
<div class="c" style="left:23.94px;width:56.73px;top:294.57px;font-size:13.5px"><span style="transform:scaleX(0.8773)">FALSCH</span></div>
<div class="c" style="left:74px;width:85px;top:294.57px;font-size:13.5px"><span style="margin-left:1.5px;transform:scaleX(0.9323)">0000001021</span></div>
<div class="c" style="left:160px;width:59px;top:294.57px;font-size:13.5px"><span style="margin-left:1.5px;transform:scaleX(0.9925)">Frau</span></div>
<div class="c" style="left:220px;width:116px;top:294.57px;font-size:13.5px"><span style="margin-left:1.5px;transform:scaleX(0.9765)">Fall</span></div>
<div class="c" style="left:337px;width:107px;top:294.57px;font-size:13.5px"><span style="margin-left:1.5px;transform:scaleX(0.9915)">Klara</span></div>
<div class="c r" style="left:445px;width:90px;top:294.57px;font-size:13.5px;text-align:right"><span style="margin-right:2px;transform:scaleX(0.9424)">22.09.1993</span></div>
<div class="c" style="left:536px;width:119px;top:294.57px;font-size:13.5px"><span style="margin-left:1.5px;transform:scaleX(1.0603)">Kühlwetterstr. 6</span></div>
<div class="c" style="left:656px;width:41px;top:294.57px;font-size:13.5px"><span style="margin-left:1.5px;transform:scaleX(0.9323)">31224</span></div>
<div class="c" style="left:698px;width:96px;top:294.57px;font-size:13.5px"><span style="margin-left:1.5px;transform:scaleX(0.9978)">Peine</span></div>
<div class="c" style="left:795px;width:122px;top:294.57px;font-size:13.5px"><span style="margin-left:1.5px;transform:scaleX(0.9332)">+49 5171 12345678</span></div>
<div class="c" style="left:918px;width:214px;top:294.57px;font-size:13.5px"><span style="margin-left:1.5px;transform:scaleX(1.0371)">klara.fall@example.com</span></div>
<div class="c" style="left:23.94px;width:56.73px;top:314.57px;font-size:13.5px"><span style="transform:scaleX(0.8773)">FALSCH</span></div>
<div class="c" style="left:74px;width:85px;top:314.57px;font-size:13.5px"><span style="margin-left:1.5px;transform:scaleX(0.9323)">0000001001</span></div>
<div class="c" style="left:160px;width:59px;top:314.57px;font-size:13.5px"><span style="margin-left:1.5px;transform:scaleX(1.0527)">Herr</span></div>
<div class="c" style="left:220px;width:116px;top:314.57px;font-size:13.5px"><span style="margin-left:1.5px;transform:scaleX(0.9872)">Fischer</span></div>
<div class="c" style="left:337px;width:107px;top:314.57px;font-size:13.5px"><span style="margin-left:1.5px;transform:scaleX(1.0341)">Peter</span></div>
<div class="c r" style="left:445px;width:90px;top:314.57px;font-size:13.5px;text-align:right"><span style="margin-right:2px;transform:scaleX(0.9424)">10.12.1988</span></div>
<div class="c" style="left:536px;width:119px;top:314.57px;font-size:13.5px"><span style="margin-left:1.5px;transform:scaleX(1.0061)">Schillerstraße 3</span></div>
<div class="c" style="left:656px;width:41px;top:314.57px;font-size:13.5px"><span style="margin-left:1.5px;transform:scaleX(0.9323)">30161</span></div>
<div class="c" style="left:698px;width:96px;top:314.57px;font-size:13.5px"><span style="margin-left:1.5px;transform:scaleX(1.0330)">Hannover</span></div>
<div class="c" style="left:795px;width:122px;top:314.57px;font-size:13.5px"><span style="margin-left:1.5px;transform:scaleX(0.9332)">+49 511 12345678</span></div>
<div class="c" style="left:918px;width:214px;top:314.57px;font-size:13.5px"><span style="margin-left:1.5px;transform:scaleX(1.0418)">peter.fischer@example.com</span></div>
<div class="c" style="left:23.94px;width:56.73px;top:334.57px;font-size:13.5px"><span style="transform:scaleX(0.8773)">FALSCH</span></div>
<div class="c" style="left:74px;width:85px;top:334.57px;font-size:13.5px"><span style="margin-left:1.5px;transform:scaleX(0.9323)">0000001022</span></div>
<div class="c" style="left:160px;width:59px;top:334.57px;font-size:13.5px"><span style="margin-left:1.5px;transform:scaleX(1.0203)">Firma</span></div>
<div class="c" style="left:220px;width:116px;top:334.57px;font-size:13.5px"><span style="margin-left:1.5px;transform:scaleX(1.0236)">Hämmerle - Holzbau</span></div>
<div class="c" style="left:337px;width:107px;top:334.57px;font-size:13.5px"><span style="margin-left:1.5px;transform:scaleX(1.0838)">Albert</span></div>
<div class="c" style="left:536px;width:119px;top:334.57px;font-size:13.5px"><span style="margin-left:1.5px;transform:scaleX(0.9995)">Holzweg 7</span></div>
<div class="c" style="left:656px;width:41px;top:334.57px;font-size:13.5px"><span style="margin-left:1.5px;transform:scaleX(0.9323)">31226</span></div>
<div class="c" style="left:698px;width:96px;top:334.57px;font-size:13.5px"><span style="margin-left:1.5px;transform:scaleX(0.9978)">Peine</span></div>
<div class="c" style="left:795px;width:122px;top:334.57px;font-size:13.5px"><span style="margin-left:1.5px;transform:scaleX(0.9332)">+49 5171 12345678</span></div>
<div class="c" style="left:918px;width:214px;top:334.57px;font-size:13.5px"><span style="margin-left:1.5px;transform:scaleX(1.0289)">holzbau@example.com</span></div>
<div class="c" style="left:23.94px;width:56.73px;top:354.57px;font-size:13.5px"><span style="transform:scaleX(0.8773)">FALSCH</span></div>
<div class="c" style="left:74px;width:85px;top:354.57px;font-size:13.5px"><span style="margin-left:1.5px;transform:scaleX(0.9323)">0000001015</span></div>
<div class="c" style="left:160px;width:59px;top:354.57px;font-size:13.5px"><span style="margin-left:1.5px;transform:scaleX(1.0527)">Herr</span></div>
<div class="c" style="left:220px;width:116px;top:354.57px;font-size:13.5px"><span style="margin-left:1.5px;transform:scaleX(0.9935)">Hansen</span></div>
<div class="c" style="left:337px;width:107px;top:354.57px;font-size:13.5px"><span style="margin-left:1.5px;transform:scaleX(1.0583)">Michael</span></div>
<div class="c r" style="left:445px;width:90px;top:354.57px;font-size:13.5px;text-align:right"><span style="margin-right:2px;transform:scaleX(0.9424)">08.08.1950</span></div>
<div class="c" style="left:536px;width:119px;top:354.57px;font-size:13.5px"><span style="margin-left:1.5px;transform:scaleX(0.9828)">Rosenstraße 15</span></div>
<div class="c" style="left:656px;width:41px;top:354.57px;font-size:13.5px"><span style="margin-left:1.5px;transform:scaleX(0.9323)">30449</span></div>
<div class="c" style="left:698px;width:96px;top:354.57px;font-size:13.5px"><span style="margin-left:1.5px;transform:scaleX(1.0330)">Hannover</span></div>
<div class="c" style="left:795px;width:122px;top:354.57px;font-size:13.5px"><span style="margin-left:1.5px;transform:scaleX(0.9332)">+49 511 12345678</span></div>
<div class="c" style="left:23.94px;width:56.73px;top:374.57px;font-size:13.5px"><span style="transform:scaleX(0.8773)">FALSCH</span></div>
<div class="c" style="left:74px;width:85px;top:374.57px;font-size:13.5px"><span style="margin-left:1.5px;transform:scaleX(0.9323)">0000001005</span></div>
<div class="c" style="left:160px;width:59px;top:374.57px;font-size:13.5px"><span style="margin-left:1.5px;transform:scaleX(1.0527)">Herr</span></div>
<div class="c" style="left:220px;width:116px;top:374.57px;font-size:13.5px"><span style="margin-left:1.5px;transform:scaleX(1.0620)">Hoffmann</span></div>
<div class="c" style="left:337px;width:107px;top:374.57px;font-size:13.5px"><span style="margin-left:1.5px;transform:scaleX(1.0488)">Markus</span></div>
<div class="c r" style="left:445px;width:90px;top:374.57px;font-size:13.5px;text-align:right"><span style="margin-right:2px;transform:scaleX(0.9424)">25.06.1979</span></div>
<div class="c" style="left:536px;width:119px;top:374.57px;font-size:13.5px"><span style="margin-left:1.5px;transform:scaleX(1.0035)">Bismarckstraße 7</span></div>
<div class="c" style="left:656px;width:41px;top:374.57px;font-size:13.5px"><span style="margin-left:1.5px;transform:scaleX(0.9323)">30161</span></div>
<div class="c" style="left:698px;width:96px;top:374.57px;font-size:13.5px"><span style="margin-left:1.5px;transform:scaleX(1.0330)">Hannover</span></div>
<div class="c" style="left:795px;width:122px;top:374.57px;font-size:13.5px"><span style="margin-left:1.5px;transform:scaleX(0.9332)">+49 511 12345678</span></div>
<div class="c" style="left:918px;width:214px;top:374.57px;font-size:13.5px"><span style="margin-left:1.5px;transform:scaleX(1.0424)">markus.hoffmann@example.com</span></div>
<div class="c" style="left:23.94px;width:56.73px;top:394.57px;font-size:13.5px"><span style="transform:scaleX(0.8773)">FALSCH</span></div>
<div class="c" style="left:74px;width:85px;top:394.57px;font-size:13.5px"><span style="margin-left:1.5px;transform:scaleX(0.9323)">0000001007</span></div>
<div class="c" style="left:160px;width:59px;top:394.57px;font-size:13.5px"><span style="margin-left:1.5px;transform:scaleX(1.0527)">Herr</span></div>
<div class="c" style="left:220px;width:116px;top:394.57px;font-size:13.5px"><span style="margin-left:1.5px;transform:scaleX(0.9855)">Koch</span></div>
<div class="c" style="left:337px;width:107px;top:394.57px;font-size:13.5px"><span style="margin-left:1.5px;transform:scaleX(1.0114)">Andreas</span></div>
<div class="c r" style="left:445px;width:90px;top:394.57px;font-size:13.5px;text-align:right"><span style="margin-right:2px;transform:scaleX(0.9424)">28.04.1967</span></div>
<div class="c" style="left:536px;width:119px;top:394.57px;font-size:13.5px"><span style="margin-left:1.5px;transform:scaleX(1.0026)">Leibnizstraße 9</span></div>
<div class="c" style="left:656px;width:41px;top:394.57px;font-size:13.5px"><span style="margin-left:1.5px;transform:scaleX(0.9323)">30449</span></div>
<div class="c" style="left:698px;width:96px;top:394.57px;font-size:13.5px"><span style="margin-left:1.5px;transform:scaleX(1.0330)">Hannover</span></div>
<div class="c" style="left:795px;width:122px;top:394.57px;font-size:13.5px"><span style="margin-left:1.5px;transform:scaleX(0.9332)">+49 511 12345678</span></div>
<div class="c" style="left:918px;width:214px;top:394.57px;font-size:13.5px"><span style="margin-left:1.5px;transform:scaleX(1.0234)">andreas.koch@example.com</span></div>
<div class="c" style="left:23.94px;width:56.73px;top:414.57px;font-size:13.5px"><span style="transform:scaleX(0.8773)">FALSCH</span></div>
<div class="c" style="left:74px;width:85px;top:414.57px;font-size:13.5px"><span style="margin-left:1.5px;transform:scaleX(0.9323)">0000001019</span></div>
<div class="c" style="left:160px;width:59px;top:414.57px;font-size:13.5px"><span style="margin-left:1.5px;transform:scaleX(1.0527)">Herr</span></div>
<div class="c" style="left:220px;width:116px;top:414.57px;font-size:13.5px"><span style="margin-left:1.5px;transform:scaleX(1.0185)">Lehmann</span></div>
<div class="c" style="left:337px;width:107px;top:414.57px;font-size:13.5px"><span style="margin-left:1.5px;transform:scaleX(0.9847)">Paul</span></div>
<div class="c r" style="left:445px;width:90px;top:414.57px;font-size:13.5px;text-align:right"><span style="margin-right:2px;transform:scaleX(0.9424)">12.04.1970</span></div>
<div class="c" style="left:536px;width:119px;top:414.57px;font-size:13.5px"><span style="margin-left:1.5px;transform:scaleX(0.9977)">Steinweg 19</span></div>
<div class="c" style="left:656px;width:41px;top:414.57px;font-size:13.5px"><span style="margin-left:1.5px;transform:scaleX(0.9323)">30169</span></div>
<div class="c" style="left:698px;width:96px;top:414.57px;font-size:13.5px"><span style="margin-left:1.5px;transform:scaleX(1.0330)">Hannover</span></div>
<div class="c" style="left:795px;width:122px;top:414.57px;font-size:13.5px"><span style="margin-left:1.5px;transform:scaleX(0.9332)">+49 511 12345678</span></div>
<div class="c" style="left:918px;width:214px;top:414.57px;font-size:13.5px"><span style="margin-left:1.5px;transform:scaleX(1.0376)">paul.lehmann@example.com</span></div>
<div class="c" style="left:23.94px;width:56.73px;top:434.57px;font-size:13.5px"><span style="transform:scaleX(0.8773)">FALSCH</span></div>
<div class="c" style="left:74px;width:85px;top:434.57px;font-size:13.5px"><span style="margin-left:1.5px;transform:scaleX(0.9323)">0000001018</span></div>
<div class="c" style="left:160px;width:59px;top:434.57px;font-size:13.5px"><span style="margin-left:1.5px;transform:scaleX(0.9925)">Frau</span></div>
<div class="c" style="left:220px;width:116px;top:434.57px;font-size:13.5px"><span style="margin-left:1.5px;transform:scaleX(1.0745)">Meyer</span></div>
<div class="c" style="left:337px;width:107px;top:434.57px;font-size:13.5px"><span style="margin-left:1.5px;transform:scaleX(0.9916)">Laura</span></div>
<div class="c r" style="left:445px;width:90px;top:434.57px;font-size:13.5px;text-align:right"><span style="margin-right:2px;transform:scaleX(0.9424)">22.01.1994</span></div>
<div class="c" style="left:536px;width:119px;top:434.57px;font-size:13.5px"><span style="margin-left:1.5px;transform:scaleX(1.0025)">Bismarckplatz 18</span></div>
<div class="c" style="left:656px;width:41px;top:434.57px;font-size:13.5px"><span style="margin-left:1.5px;transform:scaleX(0.9323)">30159</span></div>
<div class="c" style="left:698px;width:96px;top:434.57px;font-size:13.5px"><span style="margin-left:1.5px;transform:scaleX(1.0330)">Hannover</span></div>
<div class="c" style="left:795px;width:122px;top:434.57px;font-size:13.5px"><span style="margin-left:1.5px;transform:scaleX(0.9332)">+49 511 12345678</span></div>
<div class="c" style="left:918px;width:214px;top:434.57px;font-size:13.5px"><span style="margin-left:1.5px;transform:scaleX(1.0362)">laura.meyer@example.com</span></div>
<div class="c" style="left:23.94px;width:56.73px;top:454.57px;font-size:13.5px"><span style="transform:scaleX(0.8773)">FALSCH</span></div>
<div class="c" style="left:74px;width:85px;top:454.57px;font-size:13.5px"><span style="margin-left:1.5px;transform:scaleX(0.9323)">0000001000</span></div>
<div class="c" style="left:160px;width:59px;top:454.57px;font-size:13.5px"><span style="margin-left:1.5px;transform:scaleX(1.0527)">Herr</span></div>
<div class="c" style="left:220px;width:116px;top:454.57px;font-size:13.5px"><span style="margin-left:1.5px;transform:scaleX(1.1106)">Müller</span></div>
<div class="c" style="left:337px;width:107px;top:454.57px;font-size:13.5px"><span style="margin-left:1.5px;transform:scaleX(0.9736)">Hans</span></div>
<div class="c r" style="left:445px;width:90px;top:454.57px;font-size:13.5px;text-align:right"><span style="margin-right:2px;transform:scaleX(0.9424)">15.03.1946</span></div>
<div class="c" style="left:536px;width:119px;top:454.57px;font-size:13.5px"><span style="margin-left:1.5px;transform:scaleX(1.0096)">Am Beispielberg 1</span></div>
<div class="c" style="left:656px;width:41px;top:454.57px;font-size:13.5px"><span style="margin-left:1.5px;transform:scaleX(0.9323)">30159</span></div>
<div class="c" style="left:698px;width:96px;top:454.57px;font-size:13.5px"><span style="margin-left:1.5px;transform:scaleX(1.0330)">Hannover</span></div>
<div class="c" style="left:795px;width:122px;top:454.57px;font-size:13.5px"><span style="margin-left:1.5px;transform:scaleX(0.9332)">+49 511 12345678</span></div>
<div class="c" style="left:918px;width:214px;top:454.57px;font-size:13.5px"><span style="margin-left:1.5px;transform:scaleX(1.0357)">hans.muller@example.com</span></div>
<div class="c" style="left:23.94px;width:56.73px;top:474.57px;font-size:13.5px"><span style="transform:scaleX(0.8773)">FALSCH</span></div>
<div class="c" style="left:74px;width:85px;top:474.57px;font-size:13.5px"><span style="margin-left:1.5px;transform:scaleX(0.9323)">0000001013</span></div>
<div class="c" style="left:160px;width:59px;top:474.57px;font-size:13.5px"><span style="margin-left:1.5px;transform:scaleX(0.9925)">Frau</span></div>
<div class="c" style="left:220px;width:116px;top:474.57px;font-size:13.5px"><span style="margin-left:1.5px;transform:scaleX(1.1106)">Müller</span></div>
<div class="c" style="left:337px;width:107px;top:474.57px;font-size:13.5px"><span style="margin-left:1.5px;transform:scaleX(0.9730)">Lena</span></div>
<div class="c r" style="left:445px;width:90px;top:474.57px;font-size:13.5px;text-align:right"><span style="margin-right:2px;transform:scaleX(0.9424)">29.11.2000</span></div>
<div class="c" style="left:536px;width:119px;top:474.57px;font-size:13.5px"><span style="margin-left:1.5px;transform:scaleX(0.9725)">Schlossstraße 13</span></div>
<div class="c" style="left:656px;width:41px;top:474.57px;font-size:13.5px"><span style="margin-left:1.5px;transform:scaleX(0.9323)">30161</span></div>
<div class="c" style="left:698px;width:96px;top:474.57px;font-size:13.5px"><span style="margin-left:1.5px;transform:scaleX(1.0330)">Hannover</span></div>
<div class="c" style="left:795px;width:122px;top:474.57px;font-size:13.5px"><span style="margin-left:1.5px;transform:scaleX(0.9332)">+49 511 12345678</span></div>
<div class="c" style="left:918px;width:214px;top:474.57px;font-size:13.5px"><span style="margin-left:1.5px;transform:scaleX(1.0420)">lena.muller@example.com</span></div>
<div class="c" style="left:23.94px;width:56.73px;top:494.57px;font-size:13.5px"><span style="transform:scaleX(0.8773)">FALSCH</span></div>
<div class="c" style="left:74px;width:85px;top:494.57px;font-size:13.5px"><span style="margin-left:1.5px;transform:scaleX(0.9323)">0000001012</span></div>
<div class="c" style="left:160px;width:59px;top:494.57px;font-size:13.5px"><span style="margin-left:1.5px;transform:scaleX(1.0257)">Eheleute</span></div>
<div class="c" style="left:220px;width:116px;top:494.57px;font-size:13.5px"><span style="margin-left:1.5px;transform:scaleX(1.1106)">Müller</span></div>
<div class="c" style="left:337px;width:107px;top:494.57px;font-size:13.5px"><span style="margin-left:1.5px;transform:scaleX(1.0053)">Sandra und Andreas</span></div>
<div class="c r" style="left:445px;width:90px;top:494.57px;font-size:13.5px;text-align:right"><span style="margin-right:2px;transform:scaleX(0.9424)">25.02.1976</span></div>
<div class="c" style="left:536px;width:119px;top:494.57px;font-size:13.5px"><span style="margin-left:1.5px;transform:scaleX(1.0137)">Bahnhofstraße 12</span></div>
<div class="c" style="left:656px;width:41px;top:494.57px;font-size:13.5px"><span style="margin-left:1.5px;transform:scaleX(0.9323)">20095</span></div>
<div class="c" style="left:698px;width:96px;top:494.57px;font-size:13.5px"><span style="margin-left:1.5px;transform:scaleX(1.0324)">Hamburg</span></div>
<div class="c" style="left:795px;width:122px;top:494.57px;font-size:13.5px"><span style="margin-left:1.5px;transform:scaleX(0.9332)">+49 4321 0987654</span></div>
<div class="c" style="left:918px;width:214px;top:494.57px;font-size:13.5px"><span style="margin-left:1.5px;transform:scaleX(1.0374)">die-muellers@example.com</span></div>
<div class="c" style="left:23.94px;width:56.73px;top:514.57px;font-size:13.5px"><span style="transform:scaleX(0.8773)">FALSCH</span></div>
<div class="c" style="left:74px;width:85px;top:514.57px;font-size:13.5px"><span style="margin-left:1.5px;transform:scaleX(0.9323)">0000001023</span></div>
<div class="c" style="left:160px;width:59px;top:514.57px;font-size:13.5px"><span style="margin-left:1.5px;transform:scaleX(1.0203)">Firma</span></div>
<div class="c" style="left:220px;width:116px;top:514.57px;font-size:13.5px"><span style="margin-left:1.5px;transform:scaleX(1.0016)">Reifen Blank GmbH</span></div>
<div class="c" style="left:536px;width:119px;top:514.57px;font-size:13.5px"><span style="margin-left:1.5px;transform:scaleX(0.9964)">Bremsweg 10</span></div>
<div class="c" style="left:656px;width:41px;top:514.57px;font-size:13.5px"><span style="margin-left:1.5px;transform:scaleX(0.9323)">31228</span></div>
<div class="c" style="left:698px;width:96px;top:514.57px;font-size:13.5px"><span style="margin-left:1.5px;transform:scaleX(0.9978)">Peine</span></div>
<div class="c" style="left:795px;width:122px;top:514.57px;font-size:13.5px"><span style="margin-left:1.5px;transform:scaleX(0.9332)">+49 5171 12345678</span></div>
<div class="c" style="left:918px;width:214px;top:514.57px;font-size:13.5px"><span style="margin-left:1.5px;transform:scaleX(1.0424)">reifenblank@example.com</span></div>
<div class="c" style="left:23.94px;width:56.73px;top:534.57px;font-size:13.5px"><span style="transform:scaleX(0.8773)">FALSCH</span></div>
<div class="c" style="left:74px;width:85px;top:534.57px;font-size:13.5px"><span style="margin-left:1.5px;transform:scaleX(0.9323)">0000001024</span></div>
<div class="c" style="left:160px;width:59px;top:534.57px;font-size:13.5px"><span style="margin-left:1.5px;transform:scaleX(1.0527)">Herr</span></div>
<div class="c" style="left:220px;width:116px;top:534.57px;font-size:13.5px"><span style="margin-left:1.5px;transform:scaleX(0.9767)">Şahin</span></div>
<div class="c" style="left:337px;width:107px;top:534.57px;font-size:13.5px"><span style="margin-left:1.5px;transform:scaleX(1.0053)">Emre</span></div>
<div class="c r" style="left:445px;width:90px;top:534.57px;font-size:13.5px;text-align:right"><span style="margin-right:2px;transform:scaleX(0.9424)">06.03.1992</span></div>
<div class="c" style="left:536px;width:119px;top:534.57px;font-size:13.5px"><span style="margin-left:1.5px;transform:scaleX(0.9977)">Steinweg 45</span></div>
<div class="c" style="left:656px;width:41px;top:534.57px;font-size:13.5px"><span style="margin-left:1.5px;transform:scaleX(0.9323)">30169</span></div>
<div class="c" style="left:698px;width:96px;top:534.57px;font-size:13.5px"><span style="margin-left:1.5px;transform:scaleX(1.0330)">Hannover</span></div>
<div class="c" style="left:795px;width:122px;top:534.57px;font-size:13.5px"><span style="margin-left:1.5px;transform:scaleX(0.9332)">+49 511 12345678</span></div>
<div class="c" style="left:918px;width:214px;top:534.57px;font-size:13.5px"><span style="margin-left:1.5px;transform:scaleX(1.0307)">emre.sahin@example.com</span></div>
<div class="c" style="left:23.94px;width:56.73px;top:554.57px;font-size:13.5px"><span style="transform:scaleX(0.8773)">FALSCH</span></div>
<div class="c" style="left:74px;width:85px;top:554.57px;font-size:13.5px"><span style="margin-left:1.5px;transform:scaleX(0.9323)">0000001011</span></div>
<div class="c" style="left:160px;width:59px;top:554.57px;font-size:13.5px"><span style="margin-left:1.5px;transform:scaleX(0.9925)">Frau</span></div>
<div class="c" style="left:220px;width:116px;top:554.57px;font-size:13.5px"><span style="margin-left:1.5px;transform:scaleX(1.0275)">Schmidt</span></div>
<div class="c" style="left:337px;width:107px;top:554.57px;font-size:13.5px"><span style="margin-left:1.5px;transform:scaleX(0.9884)">Erika</span></div>
<div class="c r" style="left:445px;width:90px;top:554.57px;font-size:13.5px;text-align:right"><span style="margin-right:2px;transform:scaleX(0.9424)">20.07.1966</span></div>
<div class="c" style="left:536px;width:119px;top:554.57px;font-size:13.5px"><span style="margin-left:1.5px;transform:scaleX(1.0367)">Musterweg 11</span></div>
<div class="c" style="left:656px;width:41px;top:554.57px;font-size:13.5px"><span style="margin-left:1.5px;transform:scaleX(0.9323)">20095</span></div>
<div class="c" style="left:698px;width:96px;top:554.57px;font-size:13.5px"><span style="margin-left:1.5px;transform:scaleX(1.0324)">Hamburg</span></div>
<div class="c" style="left:795px;width:122px;top:554.57px;font-size:13.5px"><span style="margin-left:1.5px;transform:scaleX(0.9333)">+49 4321 012345</span></div>
<div class="c" style="left:918px;width:214px;top:554.57px;font-size:13.5px"><span style="margin-left:1.5px;transform:scaleX(1.0378)">erika.schmidt@example.com</span></div>

</body></html>
